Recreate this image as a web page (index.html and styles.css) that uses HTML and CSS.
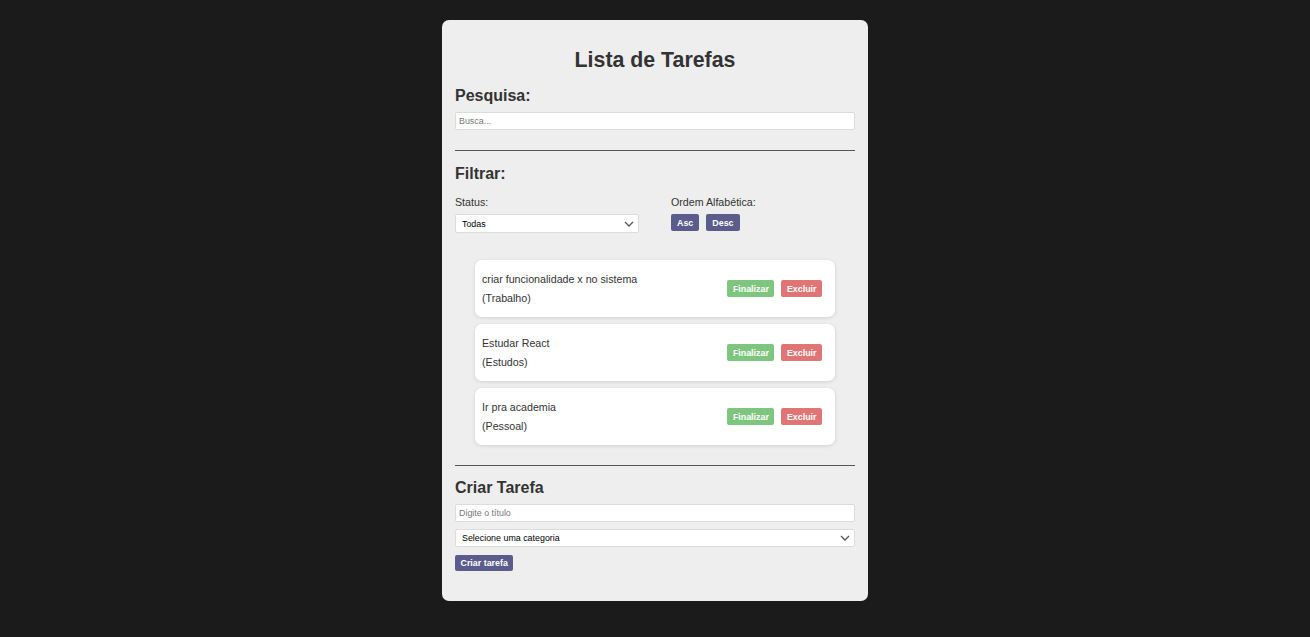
FILE: index.html
```html
<!DOCTYPE html>
<html lang="pt-BR">
<head>
<meta charset="utf-8">
<title>Lista de Tarefas</title>
<link rel="stylesheet" href="styles.css">
</head>
<body>
<div class="app">
  <h1 class="title">Lista de Tarefas</h1>

  <section class="search">
    <h2 class="section-title">Pesquisa:</h2>
    <input class="field" type="text" placeholder="Busca...">
  </section>

  <hr class="divider">

  <section class="filter">
    <h2 class="section-title">Filtrar:</h2>
    <div class="filter-options">
      <div class="filter-col">
        <p class="label">Status:</p>
        <div class="select-wrap select-status">
          <select class="select">
            <option>Todas</option>
            <option>Completas</option>
            <option>Incompletas</option>
          </select>
          <svg class="chevron" width="10" height="6" viewBox="0 0 10 6"><path d="M1 1l4 4 4-4" fill="none" stroke="#555" stroke-width="1.3"/></svg>
        </div>
      </div>
      <div class="filter-col">
        <p class="label">Ordem Alfabética:</p>
        <div class="btn-row">
          <button class="btn btn-primary btn-sort">Asc</button>
          <button class="btn btn-primary btn-sort">Desc</button>
        </div>
      </div>
    </div>
  </section>

  <div class="todo-list">
    <div class="todo">
      <div class="todo-content">
        <p class="todo-text">criar funcionalidade x no sistema</p>
        <p class="todo-category">(Trabalho)</p>
      </div>
      <div class="btn-row">
        <button class="btn btn-complete">Finalizar</button>
        <button class="btn btn-remove">Excluir</button>
      </div>
    </div>
    <div class="todo">
      <div class="todo-content">
        <p class="todo-text">Estudar React</p>
        <p class="todo-category">(Estudos)</p>
      </div>
      <div class="btn-row">
        <button class="btn btn-complete">Finalizar</button>
        <button class="btn btn-remove">Excluir</button>
      </div>
    </div>
    <div class="todo">
      <div class="todo-content">
        <p class="todo-text">Ir pra academia</p>
        <p class="todo-category">(Pessoal)</p>
      </div>
      <div class="btn-row">
        <button class="btn btn-complete">Finalizar</button>
        <button class="btn btn-remove">Excluir</button>
      </div>
    </div>
  </div>

  <hr class="divider divider-bottom">

  <section class="create">
    <h2 class="section-title">Criar Tarefa</h2>
    <input class="field" type="text" placeholder="Digite o título">
    <div class="select-wrap select-full">
      <select class="select">
        <option>Selecione uma categoria</option>
        <option>Trabalho</option>
        <option>Pessoal</option>
        <option>Estudos</option>
      </select>
      <svg class="chevron" width="10" height="6" viewBox="0 0 10 6"><path d="M1 1l4 4 4-4" fill="none" stroke="#555" stroke-width="1.3"/></svg>
    </div>
    <button class="btn btn-primary btn-create">Criar tarefa</button>
  </section>
</div>
</body>
</html>
```

FILE: styles.css
```css
* {
  box-sizing: border-box;
}

body {
  margin: 0;
  padding-top: 20px;
  background: #1b1b1b;
  font-family: "Liberation Sans", Arial, sans-serif;
  font-size: 10.67px;
  color: #333;
  display: flex;
  justify-content: center;
  min-height: 637px;
  align-items: flex-start;
}

.app {
  width: 426px;
  background: #eeeeee;
  border-radius: 7px;
  padding: 13px 13px 30px;
}

.title {
  margin: 14px 0 0;
  font-size: 21.33px;
  line-height: 27px;
  text-align: center;
  color: #333;
}

.section-title {
  margin: 0;
  font-size: 16px;
  line-height: 20px;
  color: #333;
}

.search {
  margin-top: 12px;
}

.field {
  display: block;
  width: 100%;
  height: 18px;
  margin-top: 6px;
  padding: 0 3px;
  border: 1px solid #dcdcdc;
  border-radius: 2px;
  background: #fff;
  font-family: "Liberation Sans", Arial, sans-serif;
  font-size: 8.9px;
  color: #333;
  outline: none;
}

.field::placeholder {
  color: #767676;
}

.divider {
  margin: 20px 0 0;
  border: 0;
  border-top: 1px solid #555;
  height: 0;
}

.filter {
  margin-top: 13px;
}

.filter-options {
  display: grid;
  grid-template-columns: 216px 1fr;
  margin-top: 11px;
}

.label {
  margin: 0;
  font-size: 10.67px;
  line-height: 15px;
  color: #333;
}

.select-wrap {
  position: relative;
  margin-top: 4px;
}

.select-status {
  width: 184px;
}

.select {
  display: block;
  width: 100%;
  height: 19px;
  padding: 0 6px;
  border: 1px solid #dcdcdc;
  border-radius: 2px;
  background: #fff;
  font-family: "Liberation Sans", Arial, sans-serif;
  font-size: 8.9px;
  color: #000;
  appearance: none;
  -webkit-appearance: none;
  outline: none;
}

.chevron {
  position: absolute;
  right: 5px;
  top: 7px;
  pointer-events: none;
}

.btn-row {
  display: flex;
  gap: 7px;
}

.filter-col .btn-row {
  margin-top: 4px;
}

.btn {
  height: 17px;
  padding: 0 5.5px;
  border: 0;
  border-radius: 2px;
  font-family: "Liberation Sans", Arial, sans-serif;
  font-size: 8.9px;
  font-weight: bold;
  color: #fff;
  cursor: pointer;
}

.btn-sort {
  padding: 0 6px;
}

.btn-primary {
  background: #5b5b8c;
}

.btn-complete {
  background: #7ec67e;
}

.btn-remove {
  background: #e07575;
}

.todo-list {
  width: 360px;
  margin: 27px auto 0;
  display: flex;
  flex-direction: column;
  gap: 7px;
}

.todo {
  display: flex;
  align-items: center;
  justify-content: space-between;
  height: 57px;
  padding: 0 13px 0 7px;
  background: #fff;
  border-radius: 7px;
  box-shadow: 0 1px 4px rgba(0, 0, 0, 0.12);
}

.todo-text,
.todo-category {
  margin: 0;
  font-size: 10.67px;
  line-height: 19px;
  color: #333;
}

.divider-bottom {
  margin-top: 20px;
}

.create {
  margin-top: 12px;
}

.create .field {
  margin-top: 6px;
}

.select-full {
  margin-top: 7px;
}

.select-full .select {
  height: 18px;
}

.select-full .chevron {
  top: 6px;
}

.btn-create {
  display: block;
  margin-top: 8px;
  height: 16px;
  padding: 0 5.5px;
}
```
